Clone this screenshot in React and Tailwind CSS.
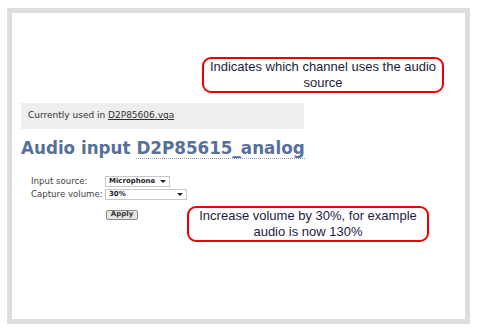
export default function App() {
  return (
    <div className="w-[477px] h-[331px] bg-white pt-[8px] pl-[7px]">
      <div className="relative w-[463px] h-[316px] border-[5px] border-[#dddddd] bg-white font-['DejaVu_Sans',sans-serif]">
        <div className="pt-[90px] pl-[9px]">
          <div className="w-[283px] h-[26px] bg-[#eeeeee] flex items-center pl-[7px] text-[9px] text-[#333333]">
            Currently used in&nbsp;
            <span className="underline text-[#333333]">D2P85606.vga</span>
          </div>
          <h1 className="mt-[8px] text-[16.75px] leading-[22px] font-bold text-[#56709c] whitespace-nowrap">
            Audio input{" "}
            <span className="border-b border-dotted border-[#8899bb]">D2P85615_analog</span>
          </h1>
          <div className="mt-[17px] pl-[10px] text-[8.6px] text-[#444444] whitespace-nowrap">
            <div className="flex items-center h-[11px]">
              <span className="w-[74px] shrink-0">Input source:</span>
              <Select label="Microphone" width="w-[65px]" />
            </div>
            <div className="flex items-center h-[11px] mt-[2px]">
              <span className="w-[74px] shrink-0">Capture volume:</span>
              <Select label="30%" width="w-[82px]" />
            </div>
            <div className="pl-[75px] mt-[7px]">
              <button className="w-[32px] h-[10px] text-[7px] leading-none font-bold text-[#333333] bg-[#e4e4e4] border border-[#8a8a8a] rounded-[2px]">
                Apply
              </button>
            </div>
          </div>
        </div>

        <Callout className="left-[190px] top-[44px]">
          Indicates which channel uses the audio source
        </Callout>
        <Callout className="left-[175px] top-[193px]">
          Increase volume by 30%, for example audio is now 130%
        </Callout>
      </div>
    </div>
  );
}

function Select({ label, width }) {
  return (
    <div
      className={`${width} shrink-0 h-[11px] flex items-center justify-between px-[3px] border border-[#c8c8c8] bg-white text-[#222222] font-bold text-[7px]`}
    >
      <span>{label}</span>
      <svg width="6" height="4" viewBox="0 0 6 4">
        <path d="M0 0h6L3 3z" fill="#222" />
      </svg>
    </div>
  );
}

function Callout({ className, children }) {
  return (
    <div
      className={`absolute ${className} w-[242px] h-[36px] border-2 border-[#ee0000] rounded-[9px] flex items-center justify-center text-center px-[4px] font-['Liberation_Sans',Arial,sans-serif] text-[13px] leading-[16px] text-[#1c1c40]`}
    >
      {children}
    </div>
  );
}
